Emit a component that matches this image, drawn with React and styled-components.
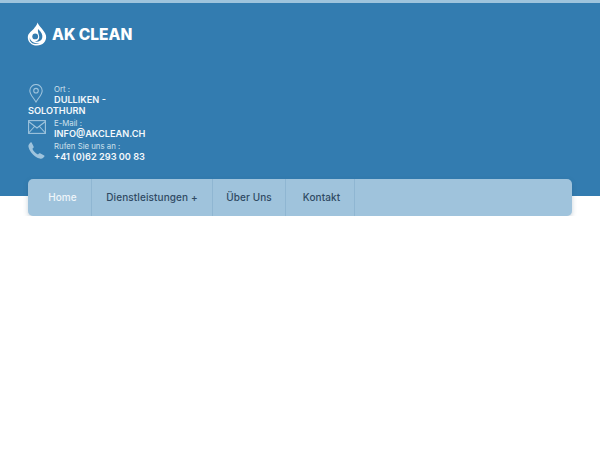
import React from 'react';
import styled, { createGlobalStyle } from 'styled-components';

const GlobalStyle = createGlobalStyle`
  html, body { margin: 0; padding: 0; background: #fff; }
  body { font-family: Inter, "Liberation Sans", sans-serif; }
`;

const TopLine = styled.div`
  height: 3px;
  background: #9fc4dd;
`;

const Header = styled.header`
  height: 193px;
  background: #337cb0;
  padding: 0 28px;
  box-sizing: border-box;
`;

const Logo = styled.div`
  display: flex;
  align-items: center;
  gap: 5px;
  padding-top: 18px;
  height: 26px;
  margin-left: -1px;
  color: #fff;
  font-size: 15.5px;
  font-weight: 800;
`;

const Contacts = styled.div`
  margin-top: 35px;
  width: 118px;
`;

const ContactItem = styled.div`
  &::after { content: ""; display: block; clear: both; }
`;

const IconSlot = styled.span`
  float: left;
  width: 26px;
  height: 22px;
  padding-top: ${p => p.$top}px;
  box-sizing: border-box;
  display: block;
  svg { display: block; }
`;

const Label = styled.div`
  font-size: 7.8px;
  line-height: 10px;
  color: #cfe0ec;
  white-space: nowrap;
  padding-top: 1.5px;
`;

const Value = styled.div`
  font-size: 9.2px;
  line-height: 11.5px;
  font-weight: 600;
  color: #f4f8fb;
  white-space: ${p => p.$wrap ? 'normal' : 'nowrap'};
`;

const NavBar = styled.nav`
  display: flex;
  margin: -17px 28px 0;
  height: 37px;
  background: #9fc3dc;
  border-radius: 5px;
  box-shadow: 0 2px 5px rgba(40, 80, 110, 0.25);
  overflow: hidden;
`;

const NavItem = styled.a`
  display: flex;
  align-items: center;
  justify-content: center;
  width: ${p => p.$w}px;
  padding: 0 0 2px ${p => p.$shift || 0}px;
  border-right: 1px solid #8fb6d2;
  box-sizing: border-box;
  font-size: 10px;
  font-weight: 500;
  letter-spacing: 0.1px;
  color: ${p => p.$active ? '#eef5fa' : '#2f4a63'};
`;

const Logomark = () => (
  <svg width="20" height="24" viewBox="0 0 20 24" fill="none">
    <path d="M10.5 0.5 C11.5 4 17.5 8 19 13.5 C20 19.5 15.5 23.5 10 23.5 C4.5 23.5 0.8 19.8 0.8 15.2 C0.8 11 5.5 9 7.5 5.8 C9 4.2 10 2.5 10.5 0.5 Z" fill="#fff" />
    <path d="M11 7 C14.5 10 16 13.2 15.2 16 C14.4 19 11 20.4 8 19.6 C11 19 12.6 17 12.2 14.5 C11.9 12.4 10.4 10 11 7 Z" fill="#337cb0" />
    <path d="M2.6 15 C3 19.4 7.6 22.2 13 21 C9 23 4.4 21.8 2.9 18.4 Z" fill="#337cb0" />
    <circle cx="8.2" cy="14.4" r="2.9" fill="#337cb0" />
  </svg>
);

const PinIcon = () => (
  <svg width="16" height="19" viewBox="0 0 16 20" fill="none" stroke="#9fc4dd" strokeWidth="1.1">
    <path d="M8 19 C5 14 1.5 11 1.5 7 A6.5 6.5 0 0 1 14.5 7 C14.5 11 11 14 8 19 Z" />
    <circle cx="8" cy="7" r="2.4" />
  </svg>
);

const MailIcon = () => (
  <svg width="18" height="14" viewBox="0 0 18 14" fill="none" stroke="#9fc4dd" strokeWidth="1.1">
    <rect x="0.6" y="0.6" width="16.8" height="12.8" />
    <path d="M0.6 1.5 L9 8 L17.4 1.5 M0.6 13 L6.5 6.5 M17.4 13 L11.5 6.5" />
  </svg>
);

const PhoneIcon = () => (
  <svg width="17" height="17" viewBox="0 0 17 17" fill="#9fc4dd">
    <path d="M3.6 0.6 L5.6 4.4 C5.9 5 5.7 5.5 5.3 5.9 L4.4 6.8 C5.2 9 7.6 11.6 10 12.6 L11 11.6 C11.4 11.2 12 11.1 12.5 11.4 L16.2 13.4 C16.6 13.7 16.7 14.2 16.4 14.6 L15 16 C14.2 16.8 13 17 11.8 16.6 C6.6 15 2 10.4 0.6 5.2 C0.2 3.9 0.5 2.8 1.2 2 L2.5 0.6 C2.8 0.2 3.3 0.2 3.6 0.6 Z" />
  </svg>
);

const App = () => (
  <>
    <GlobalStyle />
    <TopLine />
    <Header>
      <Logo>
        <Logomark />
        <span>AK CLEAN</span>
      </Logo>
      <Contacts>
        <ContactItem>
          <IconSlot $top={2}><PinIcon /></IconSlot>
          <Label>Ort :</Label>
          <Value $wrap>DULLIKEN - SOLOTHURN</Value>
        </ContactItem>
        <ContactItem>
          <IconSlot $top={3}><MailIcon /></IconSlot>
          <Label>E-Mail :</Label>
          <Value>INFO@AKCLEAN.CH</Value>
        </ContactItem>
        <ContactItem>
          <IconSlot $top={2}><PhoneIcon /></IconSlot>
          <Label>Rufen Sie uns an :</Label>
          <Value>+41 (0)62 293 00 83</Value>
        </ContactItem>
      </Contacts>
    </Header>
    <NavBar>
      <NavItem $w={64} $shift={6} $active>Home</NavItem>
      <NavItem $w={121}>Dienstleistungen +</NavItem>
      <NavItem $w={73}>Über Uns</NavItem>
      <NavItem $w={69} $shift={3}>Kontakt</NavItem>
    </NavBar>
  </>
);

export default App;
